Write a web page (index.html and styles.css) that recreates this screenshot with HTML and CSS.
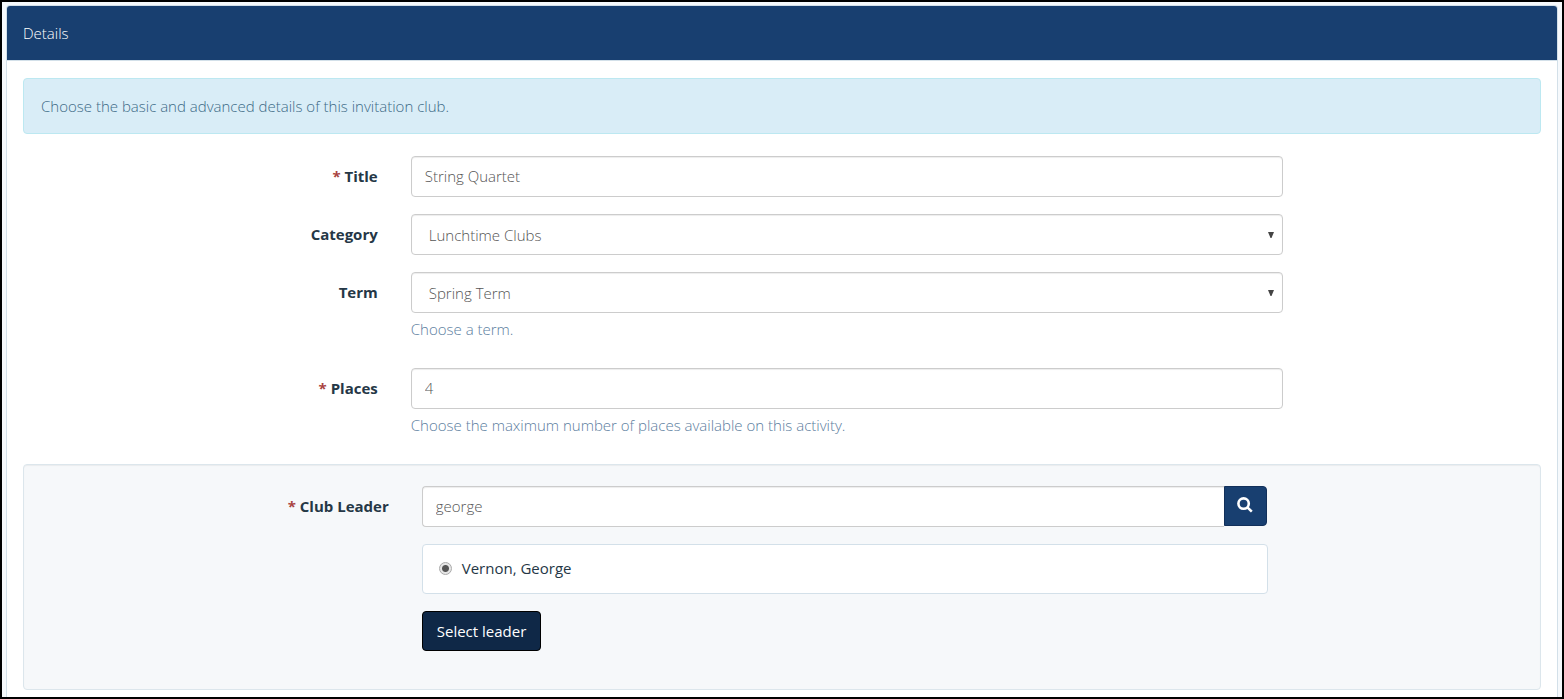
FILE: index.html
```
<!DOCTYPE html>
<html lang="en">
<head>
<meta charset="utf-8">
<meta name="viewport" content="width=device-width, initial-scale=1">
<title>Details</title>
<link rel="stylesheet" href="styles.css">
</head>
<body>
<main class="panel">
  <h1 class="panel-heading">Details</h1>
  <form class="panel-body">
    <p class="alert">Choose the basic and advanced details of this invitation club.</p>

    <div class="form-row">
      <label class="form-label" for="title"><span class="required">*</span> Title</label>
      <div class="form-field">
        <input class="control" id="title" type="text" value="String Quartet">
      </div>
    </div>

    <div class="form-row">
      <label class="form-label" for="category">Category</label>
      <div class="form-field">
        <div class="select-wrap">
          <select class="control select" id="category"><option>Lunchtime Clubs</option></select>
          <svg class="select-arrow" viewBox="0 0 6 6" aria-hidden="true"><path d="M0 0h6L3.5 6h-1z"/></svg>
        </div>
      </div>
    </div>

    <div class="form-row">
      <label class="form-label" for="term">Term</label>
      <div class="form-field">
        <div class="select-wrap">
          <select class="control select" id="term"><option>Spring Term</option></select>
          <svg class="select-arrow" viewBox="0 0 6 6" aria-hidden="true"><path d="M0 0h6L3.5 6h-1z"/></svg>
        </div>
        <p class="help">Choose a term.</p>
      </div>
    </div>

    <div class="form-row">
      <label class="form-label" for="places"><span class="required">*</span> Places</label>
      <div class="form-field">
        <input class="control" id="places" type="text" inputmode="numeric" value="4">
        <p class="help">Choose the maximum number of places available on this activity.</p>
      </div>
    </div>

    <section class="well">
      <div class="form-row">
        <label class="form-label" for="leader"><span class="required">*</span> Club Leader</label>
        <div class="form-field leader">
          <div class="input-group">
            <input class="control" id="leader" type="text" value="george">
            <button class="search-button" type="button" aria-label="Search">
              <svg class="search-icon" viewBox="0 0 16 16" aria-hidden="true"><circle cx="6.6" cy="6.6" r="5.2"/><path d="M10.4 10.4l4.4 4.2"/></svg>
            </button>
          </div>
          <div class="results">
            <label class="result"><input class="radio" type="radio" name="leader-choice" checked>Vernon, George</label>
          </div>
          <button class="select-button" type="button">Select leader</button>
        </div>
      </div>
    </section>
  </form>
</main>
</body>
</html>
```
FILE: styles.css
```
* {
  box-sizing: border-box;
}

body {
  display: flex;
  min-height: 100vh;
  margin: 0;
  padding: 3px 4px 0;
  border: 2px solid #000;
  background: #f6f9fc;
  color: #253746;
  font-family: "Open Sans", sans-serif;
  font-size: 15px;
  font-weight: 300;
  line-height: 22px;
}

input,
select,
button {
  margin: 0;
  font: inherit;
}

.panel {
  flex: 1;
  min-width: 0;
  border: 1px solid #d3e0e9;
  border-bottom: 0;
  border-radius: 4px 4px 0 0;
  background: #fff;
}

.panel-heading {
  margin: 0;
  padding: 16px;
  border-bottom: 1px solid #d3e0e9;
  border-radius: 3px 3px 0 0;
  background: #183f70;
  color: #fff;
  font-size: 15px;
  font-weight: 300;
  line-height: 22px;
}

.panel-body {
  padding: 17px 16px 7px;
}

.alert {
  margin: 0 0 22px;
  padding: 16px 17px;
  border: 1px solid #bce8f1;
  border-radius: 4px;
  background: #d9edf7;
  color: #3c6a86;
}

.form-row {
  display: grid;
  grid-template-columns: repeat(12, minmax(0, 1fr));
  column-gap: 33px;
  margin-bottom: 17px;
}

.form-label {
  grid-column: span 3;
  padding-top: 9px;
  font-weight: 700;
  text-align: right;
}

.required {
  color: #a94442;
}

.form-field {
  grid-column: span 7;
}

.control {
  display: block;
  width: 100%;
  height: 41px;
  padding: 7px 13px 9px;
  border: 1px solid #ccc;
  border-radius: 4px;
  background: #fff;
  box-shadow: inset 0 1px 1px rgba(0, 0, 0, 0.075);
  color: #555;
}

.select-wrap {
  position: relative;
}

.select {
  padding: 8px 17px;
  appearance: none;
}

.select-arrow {
  position: absolute;
  top: 18px;
  right: 9px;
  width: 6px;
  height: 6px;
  fill: #444;
  pointer-events: none;
}

.help {
  margin: 5px 0 11px;
  color: #5b7d9e;
}

.well {
  padding: 21px;
  border: 1px solid #dce6ec;
  border-radius: 4px;
  background: #f6f8fa;
  box-shadow: inset 0 1px 1px rgba(0, 0, 0, 0.05);
}

.leader {
  display: flex;
  flex-direction: column;
  align-items: flex-start;
  gap: 17px;
}

.input-group {
  display: flex;
  align-items: flex-start;
  width: 100%;
  padding-right: 1px;
}

.input-group .control {
  flex: 1;
  border-right: 0;
  border-radius: 4px 0 0 4px;
}

.search-button {
  display: flex;
  align-items: center;
  justify-content: center;
  width: 43px;
  height: 40px;
  padding: 0 0 2px;
  border: 1px solid #12305a;
  border-radius: 0 4px 4px 0;
  background: #183f70;
}

.search-icon {
  width: 16px;
  height: 16px;
  fill: none;
  stroke: #fff;
  stroke-width: 2.6;
}

.results {
  width: 100%;
  padding: 12px 16px 14px;
  border: 1px solid #d3e0e9;
  border-radius: 4px;
  background: #fff;
}

.result {
  display: flex;
  align-items: center;
  gap: 10px;
  font-weight: 400;
}

.radio {
  width: 13px;
  height: 13px;
  border: 1px solid #aaa;
  border-radius: 50%;
  background: radial-gradient(circle, #555 0 3px, #e6e6e6 4px);
  appearance: none;
}

.select-button {
  height: 40px;
  padding: 0 14px;
  border: 1px solid #000;
  border-radius: 4px;
  background: #0f2847;
  color: #fff;
  font-weight: 400;
}
```
